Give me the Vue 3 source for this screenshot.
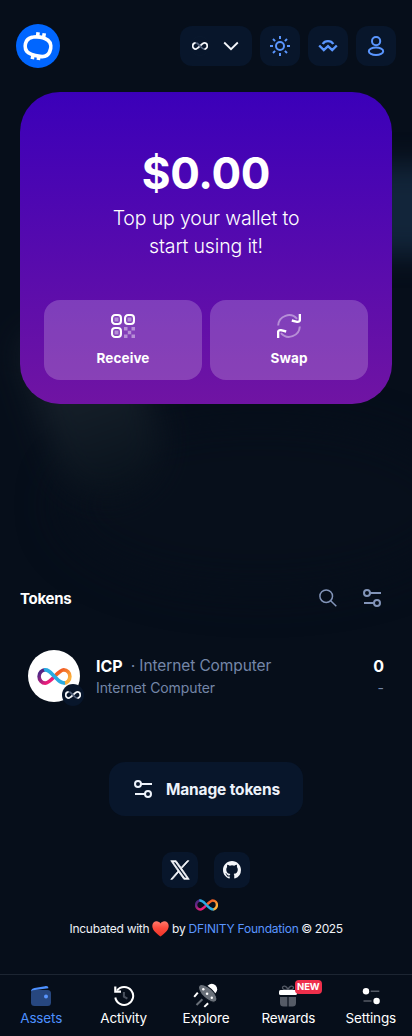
<script setup>
const nav = [
  { id: 'assets', label: 'Assets' },
  { id: 'activity', label: 'Activity' },
  { id: 'explore', label: 'Explore' },
  { id: 'rewards', label: 'Rewards', badge: 'NEW' },
  { id: 'settings', label: 'Settings' },
]
</script>

<template>
  <div class="page">
    <svg width="0" height="0" class="defs">
      <defs>
        <linearGradient id="warm" x1="0" y1="0" x2="1" y2="1">
          <stop offset=".2" stop-color="#f15a24" />
          <stop offset=".8" stop-color="#fbb03b" />
        </linearGradient>
        <linearGradient id="pink" x1="1" y1="1" x2="0" y2="0">
          <stop offset=".25" stop-color="#ed1e79" />
          <stop offset=".85" stop-color="#522785" />
        </linearGradient>
        <linearGradient id="heart" x1="0" y1="0" x2="0" y2="1">
          <stop offset="0" stop-color="#ff7a6b" />
          <stop offset=".45" stop-color="#fb4a3c" />
          <stop offset="1" stop-color="#ee3328" />
        </linearGradient>
        <symbol id="inf-color" viewBox="0 0 34 17">
          <g fill="none" stroke-width="3.600">
            <path d="M17 8.500C21 4.500 23.500 1.900 26.200 1.900a6.200 6.600 0 0 1 0 13.200" stroke="url(#warm)" />
            <path d="M17 8.500C13 12.500 10.500 15.100 7.800 15.100a6.200 6.600 0 0 1 0-13.200" stroke="url(#pink)" />
            <path d="M6.500 2.100C10.500 1 13.500 5 17 8.500S23 15.600 27.500 14.900" stroke="#29abe2" />
          </g>
        </symbol>
        <symbol id="inf-mono" viewBox="0 0 34 17">
          <g fill="none" stroke-width="3.600">
            <path d="M17 8.500C21 4.500 23.500 1.900 26.200 1.900a6.200 6.600 0 0 1 0 13.200" stroke="#f4f6fa" />
            <path d="M17 8.500C13 12.500 10.500 15.100 7.800 15.100a6.200 6.600 0 0 1 0-13.200" stroke="#f4f6fa" />
            <path d="M9 2C12 2.600 14 5.500 17 8.500S22.500 14.700 25.500 15" stroke="#56647e" />
          </g>
        </symbol>
        <symbol id="sliders" viewBox="0 0 18 18">
          <g fill="none" stroke="currentColor" stroke-width="2">
            <circle cx="4" cy="4" r="3" />
            <path d="M7 4h11M1 14h10" />
            <circle cx="14" cy="14" r="3" />
          </g>
        </symbol>
      </defs>
    </svg>

    <div class="glow glow-right"></div>
    <div class="glow glow-arc"></div>
    <div class="glow glow-left"></div>

    <header class="header">
      <svg class="logo" viewBox="0 0 44 44">
        <circle cx="22" cy="22" r="22" fill="#0066ff" />
        <g fill="none" stroke="#fff">
          <path d="M17.500 13c5.500-.7 11 .6 14.500 3.300 3.300 2.700 3.400 7.700 1.600 11.700-1.800 4.200-5.600 5-9.600 4.400-5-.8-10.800-1.900-13.200-5-2.300-3-1.800-7.600-.1-10.700 1.500-2.500 3.800-3.400 6.800-3.700Z" stroke-width="3.700" />
          <path d="M22.100 8.300l-.6 4.700M28.300 9.200l-.8 4.600M17.100 30.500l-.8 4.600M23 31.500l-.7 4.600" stroke-width="3.600" />
        </g>
      </svg>
      <div class="actions">
        <button class="chip network">
          <span class="net-ring"><svg width="16" height="8"><use href="#inf-mono" /></svg></span>
          <svg width="16" height="10" viewBox="0 0 16 10"><path d="M1.200 1.500 8 8.200l6.800-6.700" fill="none" stroke="#f4f6fa" stroke-width="1.800" /></svg>
        </button>
        <button class="chip">
          <svg width="20" height="20" viewBox="0 0 20 20" fill="none" stroke="#5a96ff" stroke-width="2">
            <circle cx="10" cy="10" r="4" />
            <path d="M10 0v3M10 17v3M0 10h3M17 10h3M3 3l2.100 2.100M14.900 14.900 17 17M3 17l2.100-2.100M14.900 5.100 17 3" />
          </svg>
        </button>
        <button class="chip">
          <svg width="20" height="14" viewBox="0 0 20 14" fill="none" stroke="#5a96ff" stroke-width="2.400">
            <path d="M4.700 5C7 1.200 13 1.200 15.300 5M1.200 6.500l4.600 4.600L10 7.200l4.200 3.900 4.600-4.600" />
          </svg>
        </button>
        <button class="chip">
          <svg width="18" height="20" viewBox="0 0 18 20" fill="none" stroke="#5a96ff" stroke-width="2">
            <rect x="5" y="1" width="8.200" height="8.200" rx="4" />
            <ellipse cx="9" cy="15.300" rx="7.200" ry="3.700" />
          </svg>
        </button>
      </div>
    </header>

    <section class="hero">
      <div class="amount">$0.00</div>
      <div class="lead">Top up your wallet to<br />start using it!</div>
      <div class="hero-actions">
        <button class="tile">
          <svg width="24" height="24" viewBox="0 0 24 24" fill="none">
            <g stroke="#fff" stroke-width="2.100">
              <rect x="1.050" y="1.050" width="8.900" height="8.900" rx="3" />
              <rect x="14.050" y="1.050" width="8.900" height="8.900" rx="3" />
              <rect x="1.050" y="14.050" width="8.900" height="8.900" rx="3" />
            </g>
            <path d="M3.500 3.500h4v4h-4zM16.500 3.500h4v4h-4zM3.500 16.500h4v4h-4zM13 13h3.500v3.500H13zM20.500 13H24v3.500h-3.500zM16.800 16.800h3.400v3.400h-3.400zM13 20.500h3.500V24H13zM20.500 20.500H24V24h-3.500z" fill="#fff" opacity=".42" />
          </svg>
          <span>Receive</span>
        </button>
        <button class="tile">
          <svg width="24" height="24" viewBox="0 0 24 24" fill="none" stroke="#fff" stroke-width="2">
            <path d="M1.200 11.500a10.800 10.800 0 0 1 18.900-6.600M22.800 12.500a10.800 10.800 0 0 1-18.900 6.600" opacity=".42" />
            <path d="M22.900 0v5.500q0 2.600-2.800 2.300l-5.300-1.300M1.100 24v-5.500q0-2.600 2.800-2.300l5.300 1.300" stroke-width="2.400" />
          </svg>
          <span>Swap</span>
        </button>
      </div>
    </section>

    <section class="tokens-head">
      <h2>Tokens</h2>
      <div class="tools">
        <svg width="18" height="18" viewBox="0 0 18 18" fill="none" stroke="#8294b8" stroke-width="1.500">
          <circle cx="7.200" cy="7.200" r="6.300" /><path d="m11.700 11.700 5.600 5.600" />
        </svg>
        <svg width="18" height="18"><use href="#sliders" /></svg>
      </div>
    </section>

    <section class="token">
      <div class="avatar">
        <svg width="35" height="17"><use href="#inf-color" /></svg>
        <span class="avatar-badge"><svg width="16" height="8"><use href="#inf-mono" /></svg></span>
      </div>
      <div class="info">
        <div class="row1"><b>ICP</b><span class="dot">·</span><span class="name">Internet Computer</span></div>
        <div class="row2">Internet Computer</div>
      </div>
      <div class="value"><b>0</b><span>-</span></div>
    </section>

    <button class="manage">
      <svg width="18" height="18"><use href="#sliders" /></svg>
      <span>Manage tokens</span>
    </button>

    <footer class="footer">
      <div class="social">
        <a class="soc"><svg width="20" height="20" viewBox="0 0 24 24" fill="#f4f6fa" stroke="#f4f6fa" stroke-width=".9"><path d="M14.200 10.200 22.700.8h-2l-7.400 8.100L7.400.8H.9l8.600 12.500L.9 23.200h2l7.500-8.600 6.200 8.600h6.500zM3.600 2.300h2.800l14 19.400h-2.800z" fill-rule="evenodd" /></svg></a>
        <a class="soc"><svg width="18" height="18" viewBox="0 0 16 16" fill="#f4f6fa"><path d="M8 0C3.580 0 0 3.580 0 8c0 3.540 2.290 6.530 5.470 7.590.4.070.55-.17.55-.38 0-.19-.01-.82-.01-1.490-2.010.37-2.530-.49-2.690-.94-.09-.23-.48-.94-.82-1.130-.28-.15-.68-.52-.01-.53.63-.01 1.080.58 1.230.82.72 1.210 1.870.87 2.330.66.07-.52.28-.87.51-1.070-1.780-.2-3.640-.89-3.640-3.950 0-.87.31-1.590.82-2.150-.08-.2-.36-1.020.08-2.120 0 0 .67-.21 2.200.82a7.600 7.600 0 0 1 4 0c1.530-1.040 2.200-.82 2.200-.82.44 1.100.16 1.920.08 2.120.51.56.82 1.270.82 2.150 0 3.070-1.870 3.750-3.650 3.950.29.25.54.73.54 1.480 0 1.070-.01 1.930-.01 2.200 0 .21.15.46.55.38A8.010 8.010 0 0 0 16 8c0-4.420-3.580-8-8-8" /></svg></a>
      </div>
      <svg class="dfinity" width="23" height="12"><use href="#inf-color" /></svg>
      <div class="credit">
        <span class="c1">Incubated with</span>
        <svg width="17" height="16" viewBox="0 0 17 16"><path d="M8.500 15.600C6 13.300.3 9.800.3 4.900.3 2.100 2.300.3 4.600.3c1.700 0 3.200.9 3.900 2.300C9.200 1.200 10.700.3 12.400.3c2.300 0 4.300 1.800 4.300 4.600 0 4.900-5.700 8.400-8.200 10.700" fill="url(#heart)" /></svg>
        <span class="c2">by</span>
        <a class="c3">DFINITY Foundation</a>
        <span class="c4">© 2025</span>
      </div>
    </footer>

    <nav class="nav">
      <a v-for="item in nav" :key="item.id" :class="['item', item.id]">
        <span class="ico">
          <svg v-if="item.id === 'assets'" width="22" height="22" viewBox="0 0 22 22">
            <rect x="1" y="5" width="20" height="16" rx="3.500" fill="#27477f" />
            <path d="M1 7C1 4 2.500 3.300 4.500 2.900L15 1.200c2.500-.4 3.300.6 3.400 2L5 5C3 5.300 2 5.500 1 7Z" fill="#4d90ff" />
            <circle cx="16" cy="11.500" r="2" fill="#5a96ff" />
          </svg>
          <svg v-else-if="item.id === 'activity'" width="22" height="22" viewBox="0 0 22 22" fill="none">
            <path d="M4 5.500A9 9 0 1 1 2.300 12.500" stroke="#fff" stroke-width="2" />
            <path d="M2.300 1.500v5.200H8" stroke="#fff" stroke-width="2.200" />
            <path d="M10.900 7v4.600l3.500 2" stroke="#4a515e" stroke-width="2" />
          </svg>
          <svg v-else-if="item.id === 'explore'" width="26" height="26" viewBox="0 0 26 26">
            <circle cx="18.800" cy="6.200" r="5.400" fill="#fff" />
            <ellipse cx="14.700" cy="10.300" rx="11.600" ry="5.300" transform="rotate(43 14.700 10.300)" fill="#697079" stroke="#060e1a" stroke-width="1" />
            <g fill="#fff"><circle cx="10.300" cy="6.300" r="1.200" /><circle cx="14.100" cy="10.700" r="1.300" /><circle cx="18.800" cy="14.700" r="1.200" /></g>
            <path d="m1.200 13.900 3.600-4.300M11.300 23.900l3.800-3.700" stroke="#fff" stroke-width="2" /><path d="m3.500 22 5.900-5.800" stroke="#697079" stroke-width="2" />
          </svg>
          <svg v-else-if="item.id === 'rewards'" width="22" height="22" viewBox="0 0 22 22">
            <path d="M11 5C8 5 5.500 4.600 5.500 2.800 5.500.5 9.500.2 11 5ZM11 5c3 0 5.500-.4 5.500-2.200C16.500.5 12.500.2 11 5Z" fill="none" stroke="#555b66" stroke-width="1.300" />
            <rect x="2" y="5" width="18" height="5" rx="1.500" fill="#fff" />
            <path d="M3 12h7.400v9.500H6.500a3.500 3.500 0 0 1-3.500-3.500zM11.600 12H19v6a3.500 3.500 0 0 1-3.500 3.500h-3.900z" fill="#555b66" />
          </svg>
          <svg v-else width="20" height="22" viewBox="0 0 20 22">
            <circle cx="5" cy="6.200" r="3.200" fill="#fff" /><circle cx="15.600" cy="16" r="3.200" fill="#fff" />
            <path d="M9.700 6.200h8.600M2.500 16h8" stroke="#555b66" stroke-width="1.500" />
          </svg>
          <em v-if="item.badge" class="badge">{{ item.badge }}</em>
        </span>
        <span class="label">{{ item.label }}</span>
      </a>
    </nav>
  </div>
</template>

<style>
body { background: #060e1a; }
</style>

<style scoped>
.page { position: relative; width: 412px; height: 1036px; overflow: hidden; background: #060e1a; color: #fff; font-family: Inter, "Open Sans", sans-serif; display: flex; flex-direction: column; box-sizing: border-box; }
.page * { box-sizing: border-box; }
svg { display: block; flex: none; }
.defs { position: absolute; }
button { border: 0; margin: 0; padding: 0; font-family: inherit; color: inherit; }
span, b, a, h2 { white-space: nowrap; }
.glow { position: absolute; }
.glow-right { left: 365px; top: 165px; width: 90px; height: 90px; background: #12253a; filter: blur(14px); }
.glow-left { left: 42px; top: 320px; width: 108px; height: 180px; background: linear-gradient(#151f29 40%, #08111b); border-radius: 20px 10px 60px 60px; transform: rotate(-18deg); filter: blur(16px); }
.glow-arc { left: 60px; top: 420px; width: 400px; height: 170px; background: #070f1b; border-radius: 50%; filter: blur(20px); }
.header { position: relative; height: 92px; padding: 0 16px; display: flex; align-items: center; justify-content: space-between; flex: none; }
.logo { width: 44px; height: 44px; }
.actions { display: flex; gap: 8px; }
.chip { width: 40px; height: 40px; border-radius: 12px; background: #08162b; display: flex; align-items: center; justify-content: center; }
.network { width: 72px; gap: 13px; padding-left: 10px; justify-content: flex-start; }
.net-ring { width: 20px; height: 20px; border-radius: 50%; border: 1px solid #0a192e; display: flex; align-items: center; justify-content: center; }
.hero { position: relative; margin: 0 20px; height: 312px; flex: none; border-radius: 40px; background: linear-gradient(#3b00b9, #7014a3); padding: 56px 24px 24px; display: flex; flex-direction: column; align-items: center; }
.amount { font-size: 44px; line-height: 50px; font-weight: 700; letter-spacing: -.3px; }
.lead { margin-top: 6px; font-size: 19.500px; line-height: 28px; text-align: center; font-weight: 300; color: #fff; letter-spacing: -.15px; }
.hero-actions { margin-top: auto; display: flex; gap: 8px; }
.tile { width: 158px; height: 80px; border-radius: 16px; background: rgba(255, 255, 255, .2); display: flex; flex-direction: column; align-items: center; padding-top: 14px; font-size: 13.500px; font-weight: 700; letter-spacing: .1px; }
.tile span { margin-top: 10px; line-height: 20px; }
.tokens-head { position: relative; margin: 182px 20px 0; height: 24px; flex: none; display: flex; align-items: center; justify-content: space-between; }
h2 { margin: 0; padding-top: 1px; font-size: 15px; font-weight: 700; line-height: 24px; letter-spacing: -.3px; }
.tools { display: flex; gap: 26px; color: #8294b8; padding-right: 11px; }
.token { position: relative; margin: 40px 28px 0; height: 52px; flex: none; display: flex; }
.avatar { position: relative; width: 52px; height: 52px; border-radius: 50%; background: #fff; display: flex; align-items: center; justify-content: center; }
.avatar-badge { position: absolute; right: -4px; bottom: -4px; width: 22px; height: 22px; border-radius: 50%; background: #08162b; display: flex; align-items: center; justify-content: center; }
.info { margin-left: 16px; flex: 1; padding-top: 4px; }
.row1 { display: flex; font-size: 16px; line-height: 24px; color: #7486a8; }
.row1 b, .value b { color: #fff; font-weight: 700; }
.dot { margin: 0 4px 0 8px; }
.name { font-size: 15.500px; letter-spacing: -.1px; }
.row2 { font-size: 14px; line-height: 20px; color: #7486a8; letter-spacing: -.1px; }
.value { padding-top: 4px; display: flex; flex-direction: column; align-items: flex-end; font-size: 16px; line-height: 24px; }
.value span { font-size: 14px; line-height: 20px; color: #7486a8; }
.manage { position: relative; margin: 60px auto 0; width: 194px; height: 54px; flex: none; border-radius: 16px; background: #08162b; display: flex; align-items: center; padding-left: 25px; gap: 14px; font-size: 15.500px; font-weight: 700; letter-spacing: -.16px; color: #eef3fb; }
.footer { position: relative; margin-top: 36px; display: flex; flex-direction: column; align-items: center; flex: none; }
.social { display: flex; gap: 16px; }
.soc { width: 36px; height: 36px; border-radius: 10px; background: #08162b; display: flex; align-items: center; justify-content: center; }
.dfinity { margin-top: 11px; }
.credit { margin-top: 8px; width: 273px; height: 20px; display: flex; justify-content: space-between; align-items: center; font-size: 12px; line-height: 20px; color: #eef1f6; }
.c1 { letter-spacing: -.28px; }
.c3 { color: #5a96ff; letter-spacing: -.22px; }
.c4 { letter-spacing: -.45px; }
.nav { position: relative; margin-top: auto; height: 62px; border-top: 1px solid #1c2532; display: flex; background: #060e1a; flex: none; }
.item { width: 82.400px; display: flex; flex-direction: column; align-items: center; padding-top: 8px; font-size: 13.500px; letter-spacing: -.15px; }
.ico { position: relative; height: 26px; display: flex; align-items: center; }
.label { line-height: 20px; margin-top: -1px; }
.assets { color: #4d90ff; }
.badge { position: absolute; left: 17.500px; top: -3.500px; width: 27px; height: 14px; border-radius: 4px; background: #ee2f4b; color: #fff; font-size: 9.500px; font-style: normal; font-weight: 700; letter-spacing: -.1px; line-height: 14px; text-align: center; }
</style>
